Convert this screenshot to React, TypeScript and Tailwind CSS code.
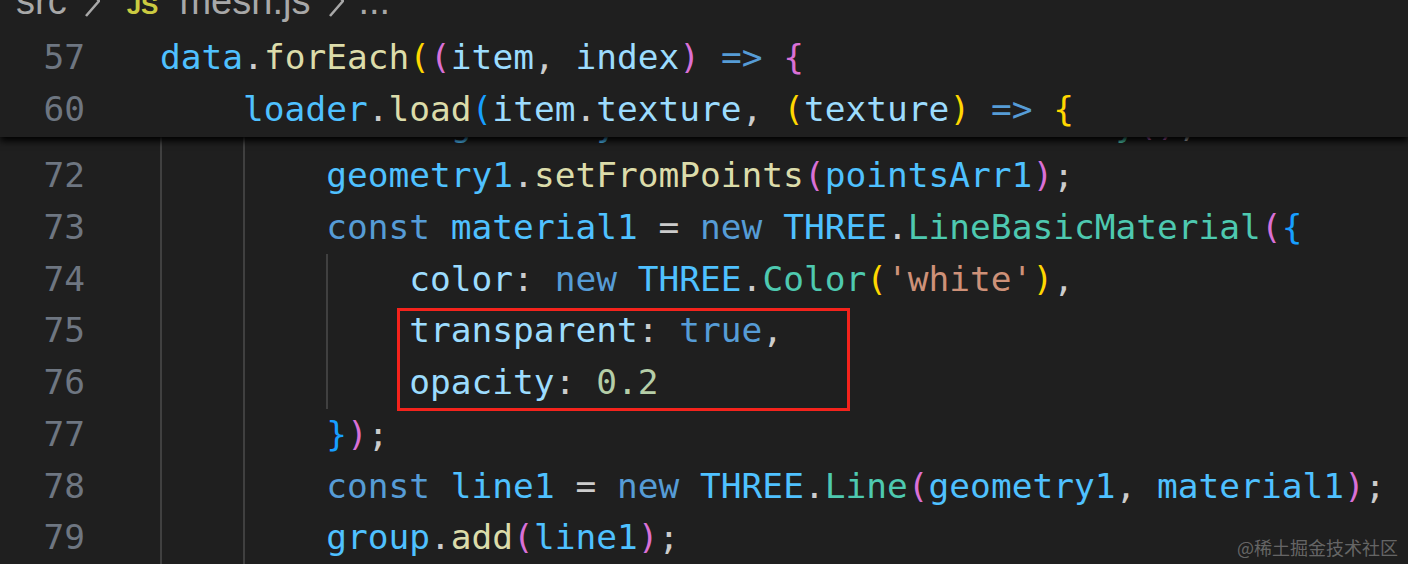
type Token = [string, string];

const V = "text-[#9cdcfe]";
const C = "text-[#4fc1ff]";
const K = "text-[#569cd6]";
const F = "text-[#dcdcaa]";
const T = "text-[#4ec9b0]";
const S = "text-[#ce9178]";
const N = "text-[#b5cea8]";
const P = "text-[#cccccc]";
const B1 = "text-[#ffd700]";
const B2 = "text-[#da70d6]";
const B3 = "text-[#179fff]";

interface CodeLine {
  num: number;
  guides: number;
  tokens: Token[];
}

const stickyLines: { num: number; indent: number; tokens: Token[] }[] = [
  {
    num: 57,
    indent: 0,
    tokens: [
      ["data", C], [".", P], ["forEach", F], ["(", B1], ["(", B2], ["item", V], [", ", P],
      ["index", V], [")", B2], [" ", P], ["=>", K], [" ", P], ["{", B2],
    ],
  },
  {
    num: 60,
    indent: 1,
    tokens: [
      ["loader", C], [".", P], ["load", F], ["(", B3], ["item", V], [".", P], ["texture", V],
      [", ", P], ["(", B1], ["texture", V], [")", B1], [" ", P], ["=>", K], [" ", P], ["{", B1],
    ],
  },
];

const lines: CodeLine[] = [
  {
    num: 71,
    guides: 2,
    tokens: [
      ["const", K], [" ", P], ["geometry1", C], [" = ", P], ["new", K], [" ", P], ["THREE", C],
      [".", P], ["BoxGeometry", T], ["()", B2], [";", P],
    ],
  },
  {
    num: 72,
    guides: 2,
    tokens: [
      ["geometry1", C], [".", P], ["setFromPoints", F], ["(", B2], ["pointsArr1", C], [")", B2], [";", P],
    ],
  },
  {
    num: 73,
    guides: 2,
    tokens: [
      ["const", K], [" ", P], ["material1", C], [" = ", P], ["new", K], [" ", P], ["THREE", C],
      [".", P], ["LineBasicMaterial", T], ["(", B2], ["{", B3],
    ],
  },
  {
    num: 74,
    guides: 3,
    tokens: [
      ["color", V], [": ", P], ["new", K], [" ", P], ["THREE", C], [".", P], ["Color", T],
      ["(", B1], ["'white'", S], [")", B1], [",", P],
    ],
  },
  {
    num: 75,
    guides: 3,
    tokens: [["transparent", V], [": ", P], ["true", K], [",", P]],
  },
  {
    num: 76,
    guides: 3,
    tokens: [["opacity", V], [": ", P], ["0.2", N]],
  },
  {
    num: 77,
    guides: 2,
    tokens: [["}", B3], [")", B2], [";", P]],
  },
  {
    num: 78,
    guides: 2,
    tokens: [
      ["const", K], [" ", P], ["line1", C], [" = ", P], ["new", K], [" ", P], ["THREE", C],
      [".", P], ["Line", T], ["(", B2], ["geometry1", C], [", ", P], ["material1", C], [")", B2], [";", P],
    ],
  },
  {
    num: 79,
    guides: 2,
    tokens: [["group", C], [".", P], ["add", F], ["(", B2], ["line1", C], [")", B2], [";", P]],
  },
];

function Tokens({ tokens }: { tokens: Token[] }) {
  return (
    <span className="whitespace-pre">
      {tokens.map(([text, cls], i) => (
        <span key={i} className={cls}>
          {text}
        </span>
      ))}
    </span>
  );
}

function Chevron() {
  return (
    <svg width="16" height="32" viewBox="0 0 16 32" className="shrink-0">
      <path d="M2 1 L15 16 L2 31" fill="none" stroke="#a8a8a8" strokeWidth="2.6" />
    </svg>
  );
}

export default function App() {
  return (
    <div className="relative w-[1408px] h-[564px] overflow-hidden bg-[#1f1f1f] font-['DejaVu_Sans_Mono',monospace] text-[34.5px] leading-[51.7px]">
      {/* sticky header */}
      <div className="relative z-10 h-[137px] bg-[#1f1f1f] shadow-[0_4px_7px_#000]">
        <div className="h-[32px] overflow-hidden">
          <div className="flex items-center h-[44px] -mt-[21px] pl-[16px] font-['Liberation_Sans',Arial,sans-serif] text-[38px] leading-none text-[#a8a8a8]">
            <span>src</span>
            <span className="ml-[17px]">
              <Chevron />
            </span>
            <span className="ml-[27px] mt-[7px] text-[26px] font-extrabold text-[#cbcb41]">JS</span>
            <span className="ml-[21px]">mesh.js</span>
            <span className="ml-[18px]">
              <Chevron />
            </span>
            <span className="ml-[14px]">...</span>
          </div>
        </div>
        {stickyLines.map((line) => (
          <div key={line.num} className="flex h-[51.7px]">
            <div className="w-[85px] shrink-0 text-right text-[#6e7681]">{line.num}</div>
            <div className="w-[75px] shrink-0" />
            {line.indent > 0 && <div className="w-[4ch] shrink-0" />}
            <Tokens tokens={line.tokens} />
          </div>
        ))}
      </div>

      {/* scrolled code */}
      <div className="-mt-[38.3px]">
        {lines.map((line) => (
          <div key={line.num} className="flex h-[51.7px]">
            <div className="w-[85px] shrink-0 text-right text-[#6e7681]">{line.num}</div>
            <div className="w-[75px] shrink-0" />
            <div className="w-[4ch] shrink-0 border-l-2 border-[#404040]" />
            <div className="w-[4ch] shrink-0 border-l-2 border-[#404040]" />
            {line.guides > 2 && <div className="w-[4ch] shrink-0 border-l-2 border-[#404040]" />}
            <Tokens tokens={line.tokens} />
          </div>
        ))}
      </div>

      {/* annotation box */}
      <div className="absolute left-[397px] top-[308px] w-[453px] h-[103px] border-[3px] border-[#f4231c]" />

      {/* watermark */}
      <div className="absolute right-[10px] bottom-[8px] font-['Noto_Sans_CJK_SC','Noto_Sans',sans-serif] text-[18px] leading-none text-[rgba(255,255,255,0.33)]">
        @稀土掘金技术社区
      </div>
    </div>
  );
}
